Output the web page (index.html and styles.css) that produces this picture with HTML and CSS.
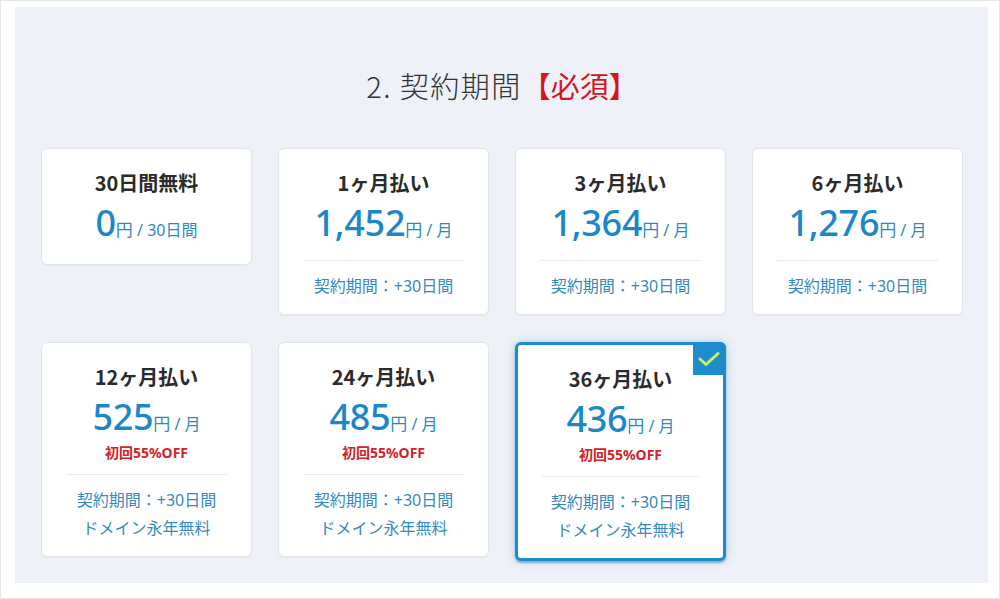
FILE: index.html
```html
<!DOCTYPE html>
<html lang="ja">
<head>
<meta charset="utf-8">
<title>契約期間</title>
<link rel="stylesheet" href="styles.css">
</head>
<body>
<div class="frame">
  <section class="panel">
    <h2 class="heading">2. 契約期間<span class="req">【必須】</span></h2>
    <div class="grid">
      <div class="card card-free">
        <div class="plan">30日間無料</div>
        <div class="price"><span class="num">0</span><span class="unit">円</span><span class="per"> / 30日間</span></div>
      </div>
      <div class="card">
        <div class="plan">1ヶ月払い</div>
        <div class="price"><span class="num">1,452</span><span class="unit">円</span><span class="per"> / 月</span></div>
        <div class="divider"></div>
        <div class="info">契約期間：+30日間</div>
      </div>
      <div class="card">
        <div class="plan">3ヶ月払い</div>
        <div class="price"><span class="num">1,364</span><span class="unit">円</span><span class="per"> / 月</span></div>
        <div class="divider"></div>
        <div class="info">契約期間：+30日間</div>
      </div>
      <div class="card">
        <div class="plan">6ヶ月払い</div>
        <div class="price"><span class="num">1,276</span><span class="unit">円</span><span class="per"> / 月</span></div>
        <div class="divider"></div>
        <div class="info">契約期間：+30日間</div>
      </div>
      <div class="card">
        <div class="plan">12ヶ月払い</div>
        <div class="price"><span class="num">525</span><span class="unit">円</span><span class="per"> / 月</span></div>
        <div class="off">初回55%OFF</div>
        <div class="divider divider-off"></div>
        <div class="info">契約期間：+30日間</div>
        <div class="info">ドメイン永年無料</div>
      </div>
      <div class="card">
        <div class="plan">24ヶ月払い</div>
        <div class="price"><span class="num">485</span><span class="unit">円</span><span class="per"> / 月</span></div>
        <div class="off">初回55%OFF</div>
        <div class="divider divider-off"></div>
        <div class="info">契約期間：+30日間</div>
        <div class="info">ドメイン永年無料</div>
      </div>
      <div class="card card-selected">
        <span class="badge"><svg width="33" height="33" viewBox="0 0 33 33"><path d="M7 17 L13 22.5 L25 11.5" fill="none" stroke="#c9f060" stroke-width="3" stroke-linecap="round" stroke-linejoin="round"/></svg></span>
        <div class="plan">36ヶ月払い</div>
        <div class="price"><span class="num">436</span><span class="unit">円</span><span class="per"> / 月</span></div>
        <div class="off">初回55%OFF</div>
        <div class="divider divider-off"></div>
        <div class="info">契約期間：+30日間</div>
        <div class="info">ドメイン永年無料</div>
      </div>
    </div>
  </section>
</div>
</body>
</html>
```

FILE: styles.css
```css
* { box-sizing: border-box; }
html, body { margin: 0; padding: 0; background: #ffffff; }
body {
  font-family: "Noto Sans", "Noto Sans CJK JP", sans-serif;
  color: #333333;
}
.frame {
  width: 1000px;
  height: 599px;
  border: 1px solid #e6e6e6;
  padding: 6px 11px 0 14px;
}
.panel {
  background: #eef1f7;
  width: 973px;
  height: 576px;
  padding: 58px 25px 0 26px;
}
.heading {
  margin: 0 0 43px;
  text-align: center;
  font-family: "Noto Sans CJK JP", sans-serif;
  font-weight: 300;
  font-size: 29px;
  line-height: 40px;
  letter-spacing: 1.5px;
  color: #333333;
}
.req { color: #d7141c; letter-spacing: 0; font-weight: 400; }
.grid {
  display: grid;
  grid-template-columns: repeat(4, 211px);
  column-gap: 26px;
  row-gap: 27px;
  align-items: start;
}
.card {
  position: relative;
  background: #ffffff;
  border: 1px solid #e2e5ea;
  border-radius: 6px;
  box-shadow: 0 1px 1px rgba(0, 0, 0, 0.04);
  padding: 20px 0 14px;
  text-align: center;
}
.card-free { padding-bottom: 21px; }
.card-selected {
  border: 3px solid #1d8ccf;
  box-shadow: 0 0 10px rgba(40, 150, 220, 0.35), 0 2px 2px rgba(20, 90, 140, 0.4);
}
.badge {
  position: absolute;
  top: -3px;
  right: -3px;
  width: 33px;
  height: 33px;
  background: #1d8ccf;
  border-top-right-radius: 6px;
  display: block;
}
.badge svg { display: block; }
.plan {
  font-family: "Noto Sans CJK JP", sans-serif;
  font-weight: 700;
  font-size: 20px;
  line-height: 28px;
  color: #2b2b2b;
}
.price {
  margin-top: 6px;
  line-height: 40px;
  height: 40px;
  color: #1b87c9;
  white-space: nowrap;
}
.num {
  font-family: "Noto Sans", sans-serif;
  font-weight: 500;
  font-size: 36px;
  letter-spacing: -0.3px;
}
.unit, .per {
  font-family: "Noto Sans", "Noto Sans CJK JP", sans-serif;
  font-size: 17px;
  color: #2a8ac4;
}
.per { font-size: 16px; }
.off {
  margin-top: 6px;
  font-family: "Noto Sans", "Noto Sans CJK JP", sans-serif;
  font-weight: 700;
  font-size: 14px;
  line-height: 20px;
  color: #d2232a;
}
.divider {
  height: 1px;
  background: #e6e9ee;
  margin: 17px 24px 11px;
}
.divider-off { margin-top: 11px; }
.info {
  font-family: "Noto Sans", "Noto Sans CJK JP", sans-serif;
  font-size: 16px;
  line-height: 28px;
  color: #3589c0;
}
```
